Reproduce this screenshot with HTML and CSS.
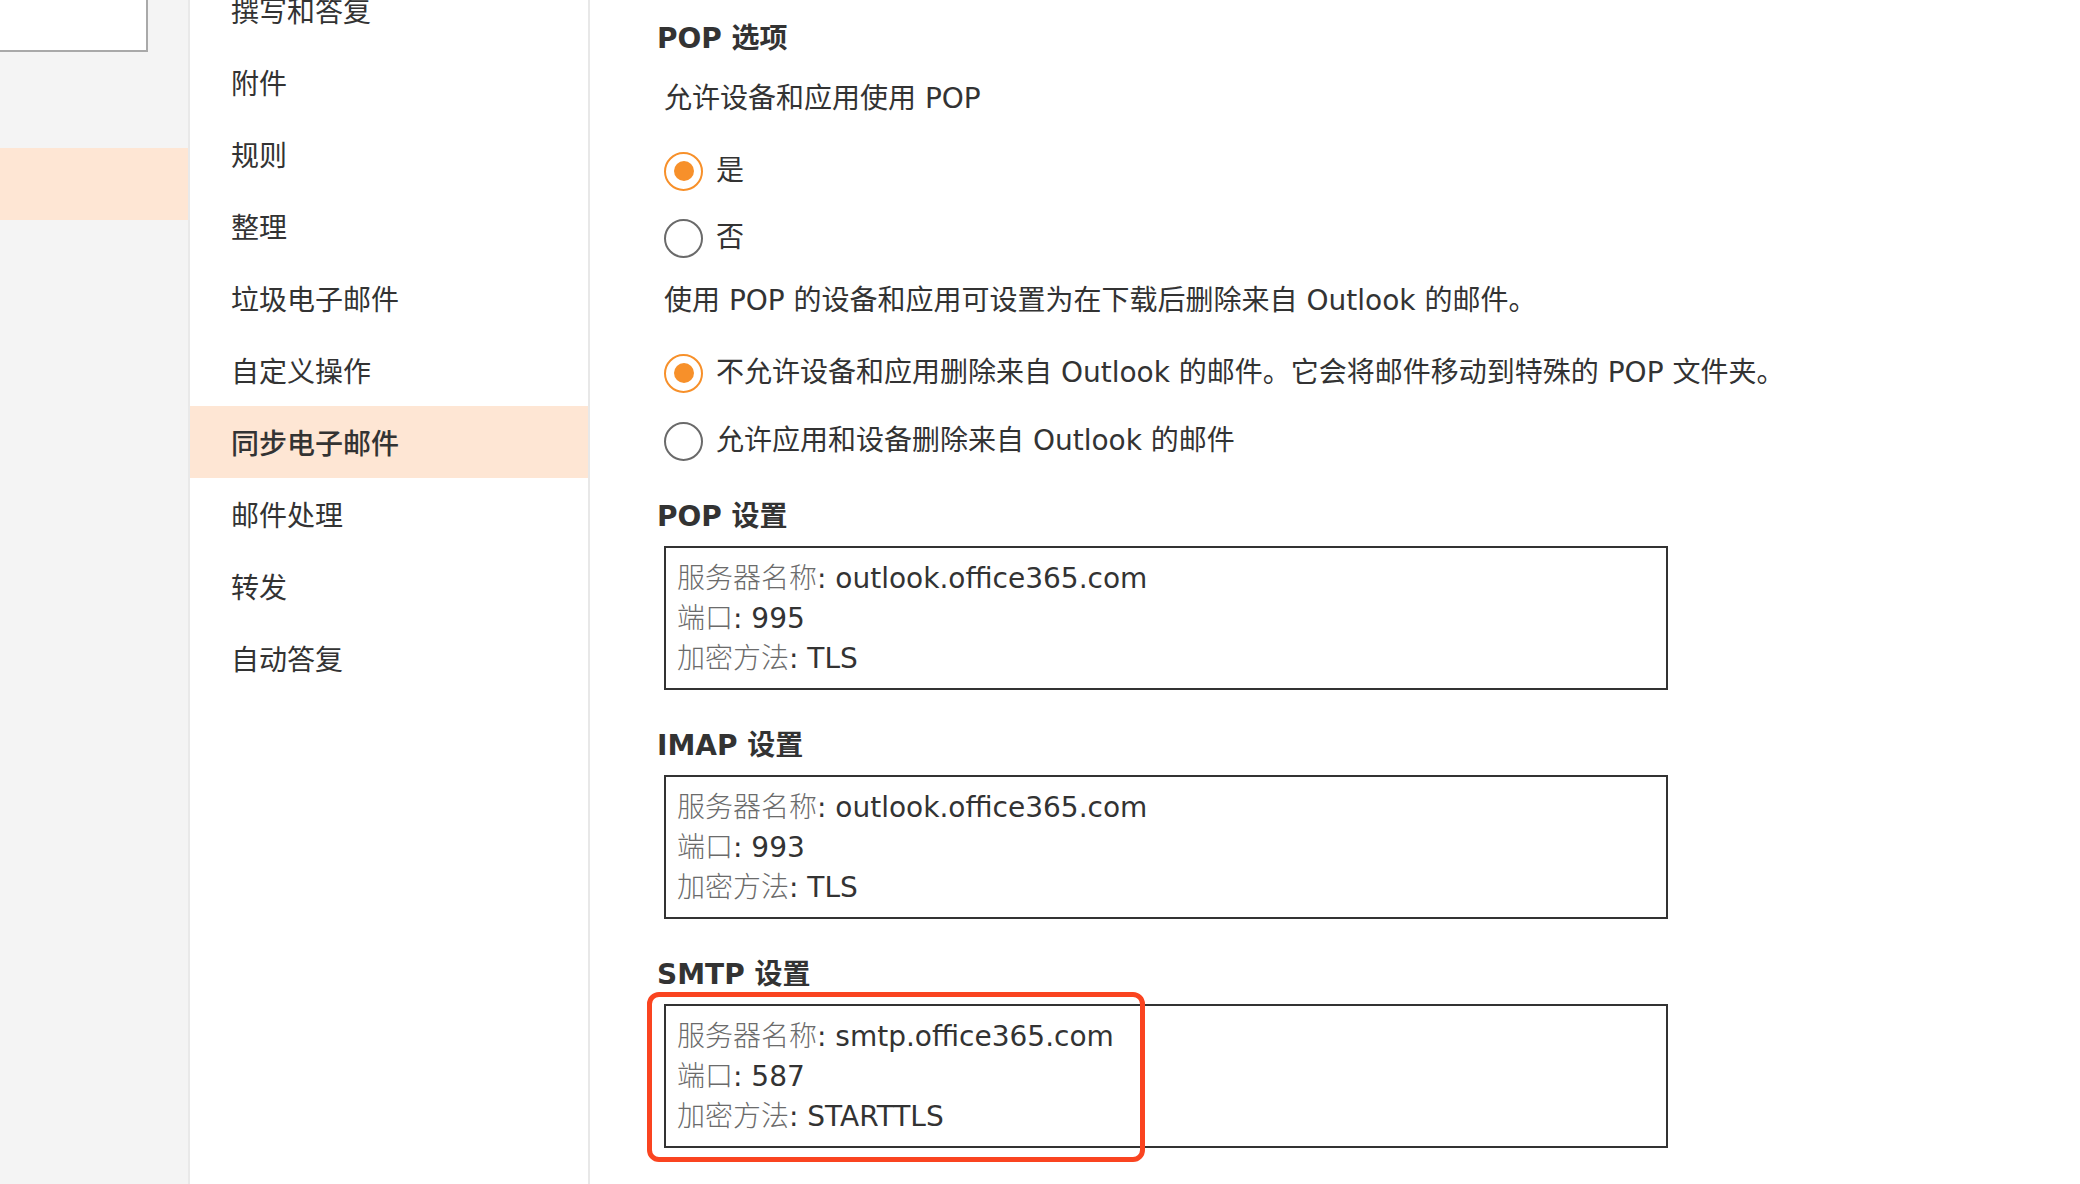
FILE: index.html
```html
<!DOCTYPE html>
<html lang="zh-CN">
<head>
<meta charset="utf-8">
<title>同步电子邮件</title>
<link rel="stylesheet" href="styles.css">
</head>
<body>
<div class="page">
  <aside class="rail">
    <div class="rail-box"></div>
    <div class="rail-active"></div>
  </aside>
  <nav class="nav">
    <ul class="nav-list">
      <li class="nav-item">撰写和答复</li>
      <li class="nav-item">附件</li>
      <li class="nav-item">规则</li>
      <li class="nav-item">整理</li>
      <li class="nav-item">垃圾电子邮件</li>
      <li class="nav-item">自定义操作</li>
      <li class="nav-item is-active">同步电子邮件</li>
      <li class="nav-item">邮件处理</li>
      <li class="nav-item">转发</li>
      <li class="nav-item">自动答复</li>
    </ul>
  </nav>
  <main class="main">
    <h2 class="heading">POP 选项</h2>
    <p class="text t-allow">允许设备和应用使用 POP</p>
    <div class="radio-row r-first"><span class="radio checked"></span><span class="radio-label">是</span></div>
    <div class="radio-row r-second r-tight"><span class="radio"></span><span class="radio-label">否</span></div>
    <p class="text t-desc">使用 POP 的设备和应用可设置为在下载后删除来自 Outlook 的邮件。</p>
    <div class="radio-row r-first"><span class="radio checked"></span><span class="radio-label">不允许设备和应用删除来自 Outlook 的邮件。它会将邮件移动到特殊的 POP 文件夹。</span></div>
    <div class="radio-row r-second"><span class="radio"></span><span class="radio-label">允许应用和设备删除来自 Outlook 的邮件</span></div>

    <section class="settings settings-first">
      <h2 class="heading">POP 设置</h2>
      <div class="info-box">
        <div class="info-line"><span class="lbl">服务器名称</span><span class="val">: outlook.office365.com</span></div>
        <div class="info-line"><span class="lbl">端口</span><span class="val">: 995</span></div>
        <div class="info-line"><span class="lbl">加密方法</span><span class="val">: TLS</span></div>
      </div>
    </section>

    <section class="settings">
      <h2 class="heading">IMAP 设置</h2>
      <div class="info-box">
        <div class="info-line"><span class="lbl">服务器名称</span><span class="val">: outlook.office365.com</span></div>
        <div class="info-line"><span class="lbl">端口</span><span class="val">: 993</span></div>
        <div class="info-line"><span class="lbl">加密方法</span><span class="val">: TLS</span></div>
      </div>
    </section>

    <section class="settings">
      <h2 class="heading">SMTP 设置</h2>
      <div class="info-box">
        <div class="info-line"><span class="lbl">服务器名称</span><span class="val">: smtp.office365.com</span></div>
        <div class="info-line"><span class="lbl">端口</span><span class="val">: 587</span></div>
        <div class="info-line"><span class="lbl">加密方法</span><span class="val">: STARTTLS</span></div>
      </div>
    </section>

    <div class="highlight"></div>
  </main>
</div>
</body>
</html>
```

FILE: styles.css
```css
* {
  box-sizing: border-box;
}

html, body {
  margin: 0;
  padding: 0;
  background: #ffffff;
}

body {
  font-family: "DejaVu Sans", "Noto Sans CJK SC", sans-serif;
  color: #333333;
  width: 2080px;
  height: 1184px;
  overflow: hidden;
}

.page {
  display: flex;
  height: 1184px;
}

/* left rail */
.rail {
  width: 190px;
  flex: 0 0 190px;
  background: #f4f4f4;
  border-right: 2px solid #e9e9e9;
  display: flex;
  flex-direction: column;
}

.rail-box {
  width: 148px;
  height: 52px;
  background: #ffffff;
  border-right: 2px solid #a9a9a9;
  border-bottom: 2px solid #a9a9a9;
}

.rail-active {
  margin-top: 96px;
  height: 72px;
  background: #fee6d4;
}

/* nav column */
.nav {
  width: 400px;
  flex: 0 0 400px;
  border-right: 2px solid #e8e8e8;
  background: #ffffff;
}

.nav-list {
  list-style: none;
  margin: -26px 0 0 0;
  padding: 0;
}

.nav-item {
  height: 72px;
  line-height: 72px;
  padding-left: 41px;
  font-family: "Noto Sans CJK SC", sans-serif;
  font-size: 28px;
  color: #333333;
}

.nav-item.is-active {
  background: #fee6d4;
  font-weight: 500;
}

/* main */
.main {
  position: relative;
  flex: 1 1 auto;
  padding: 20px 0 0 67px;
  font-size: 28px;
}

.heading {
  margin: 0;
  height: 40px;
  line-height: 37.5px;
  font-size: 28px;
  font-weight: 700;
  color: #333333;
}

.text {
  margin: 0 0 0 7px;
  height: 40px;
  line-height: 37.5px;
  white-space: nowrap;
}

.t-allow {
  margin-top: 20px;
}

.t-desc {
  margin-top: 24px;
}

.radio-row {
  display: flex;
  align-items: center;
  gap: 13px;
  height: 40px;
  margin-left: 7px;
  line-height: 37.5px;
  white-space: nowrap;
}

.r-first {
  margin-top: 31px;
}

.r-second {
  margin-top: 28px;
}

.r-second.r-tight {
  margin-top: 27px;
}

.radio {
  width: 39px;
  height: 39px;
  flex: 0 0 39px;
  border-radius: 50%;
  border: 2px solid #6a6a6a;
  display: flex;
  align-items: center;
  justify-content: center;
  background: #ffffff;
}

.radio.checked {
  border: 2.5px solid #f7902a;
}

.radio.checked::after {
  content: "";
  width: 20px;
  height: 20px;
  border-radius: 50%;
  background: #f7902a;
}

.settings {
  margin-top: 37px;
}

.settings.settings-first {
  margin-top: 37px;
}

.info-box {
  margin: 8px 0 0 7px;
  width: 1004px;
  border: 2px solid #333333;
  padding: 10px 11px 10px 11px;
}

.info-line {
  height: 40px;
  line-height: 37.5px;
  white-space: nowrap;
}

.lbl {
  font-family: "Noto Sans CJK SC", sans-serif;
  font-weight: 300;
  color: #6b6b6b;
}

.val {
  color: #333333;
}

/* annotation over the SMTP box */
.highlight {
  position: absolute;
  left: 57px;
  top: 992px;
  width: 498px;
  height: 170px;
  border: 5px solid #fa4420;
  border-radius: 12px;
  pointer-events: none;
}
```
